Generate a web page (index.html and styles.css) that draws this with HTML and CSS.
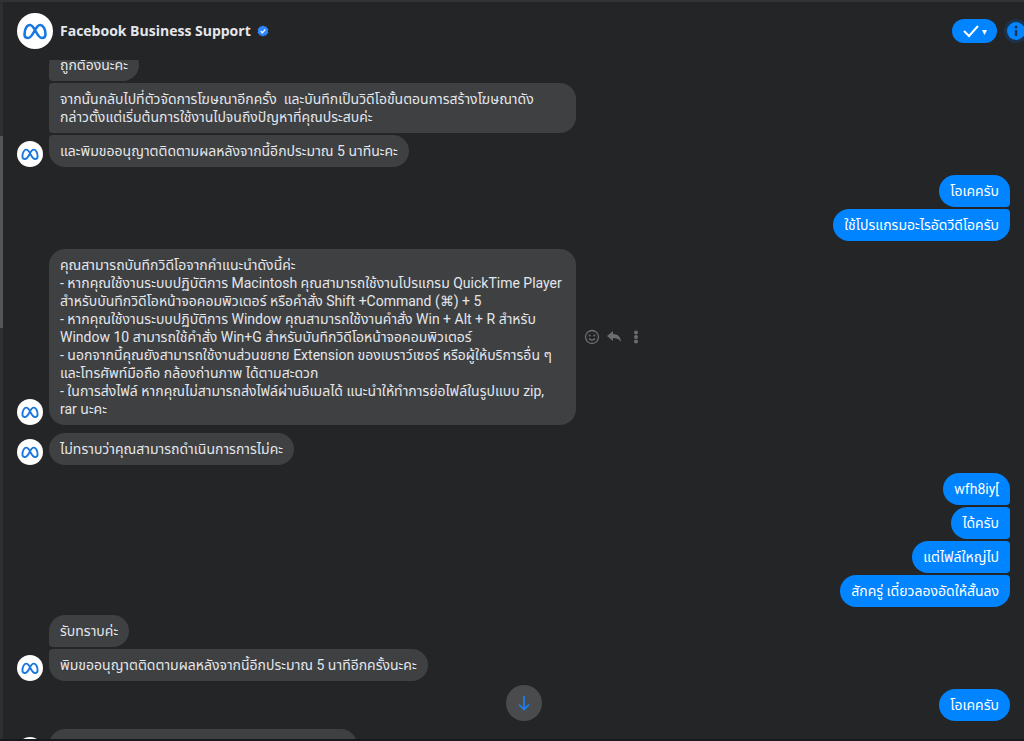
FILE: index.html
```html
<!DOCTYPE html>
<html lang="th">
  <head>
    <meta charset="utf-8">
    <title>Facebook Business Support</title>
    <link rel="stylesheet" href="styles.css">
  </head>
  <body>
    <svg class="symbols">
      <symbol id="meta" viewBox="0 0 36 36">
        <path d="M7.500 21.500C7.500 16 10 12 13 12c5 0 6.500 13 12 13 2 0 3.500-1.300 3.500-4C28.500 16 26 12 23 12c-5 0-6.500 13-12 13-2 0-3.500-1-3.500-3.500z" fill="none" stroke="#1877e0" stroke-width="2.600"/>
      </symbol>
    </svg>

    <div class="sidebar"><div class="thumb"></div></div>

    <main class="chat">
      <header class="header">
        <svg class="logo"><use href="#meta"/></svg>
        <h1>Facebook Business Support</h1>
        <svg class="verified" viewBox="0 0 12 12">
          <path d="M6 0.500l1.500 1 1.800-.1.600 1.700 1.500 1-.6 1.900.6 1.900-1.500 1-.6 1.700-1.800-.1-1.500 1-1.500-1-1.800.1-.6-1.700-1.500-1L1.200 6 .6 4.100l1.500-1 .6-1.700 1.800.1z" fill="#2d88ff"/>
          <path d="M3.700 6.100l1.600 1.600 3-3.200" fill="none" stroke="#fff" stroke-width="1.300"/>
        </svg>
        <div class="headerButtons">
          <button class="doneButton" aria-label="Done">
            <svg width="26" height="14" viewBox="0 0 26 14">
              <path d="M2 7l5 5L16 2" fill="none" stroke="#fff" stroke-width="2"/>
              <path d="M20 6h5l-2.500 5z" fill="#fff"/>
            </svg>
          </button>
          <button class="infoButton" aria-label="Info">
            <svg width="18" height="18" viewBox="0 0 18 18">
              <circle cx="9" cy="9" r="9" fill="#0084ff"/>
              <circle cx="9" cy="5" r="1.500" fill="#1c3350"/>
              <path d="M9 8v6" stroke="#1c3350" stroke-width="2.400"/>
            </svg>
          </button>
        </div>
      </header>

      <div class="messages">
        <div class="group in clipped">
          <p class="bubble">ถูกต้องนะคะ</p>
          <p class="bubble long">จากนั้นกลับไปที่ตัวจัดการโฆษณาอีกครั้ง &nbsp;และบันทึกเป็นวิดีโอขั้นตอนการสร้างโฆษณาดัง<br>กล่าวตั้งแต่เริ่มต้นการใช้งานไปจนถึงปัญหาที่คุณประสบค่ะ</p>
          <p class="bubble">และพิมขออนุญาตติดตามผลหลังจากนี้อีกประมาณ 5 นาทีนะคะ</p>
          <svg class="avatar"><use href="#meta"/></svg>
        </div>

        <div class="group out">
          <p class="bubble">โอเคครับ</p>
          <p class="bubble">ใช้โปรแกรมอะไรอัดวีดีโอครับ</p>
        </div>

        <div class="group in">
          <p class="bubble long">คุณสามารถบันทึกวิดีโอจากคำแนะนำดังนี้ค่ะ<br>- หากคุณใช้งานระบบปฏิบัติการ Macintosh คุณสามารถใช้งานโปรแกรม QuickTime Player<br>สำหรับบันทึกวิดีโอหน้าจอคอมพิวเตอร์ หรือคำสั่ง Shift +Command (⌘) + 5<br>- หากคุณใช้งานระบบปฏิบัติการ Window คุณสามารถใช้งานคำสั่ง Win + Alt + R สำหรับ<br>Window 10 สามารถใช้คำสั่ง Win+G สำหรับบันทึกวิดีโอหน้าจอคอมพิวเตอร์<br>- นอกจากนี้คุณยังสามารถใช้งานส่วนขยาย Extension ของเบราว์เซอร์ หรือผู้ให้บริการอื่น ๆ<br>และโทรศัพท์มือถือ กล้องถ่านภาพ ได้ตามสะดวก<br>- ในการส่งไฟล์ หากคุณไม่สามารถส่งไฟล์ผ่านอีเมลได้ แนะนำให้ทำการย่อไฟล์ในรูปแบบ zip,<br>rar นะคะ</p>
          <svg class="avatar"><use href="#meta"/></svg>
          <div class="actions">
            <button aria-label="React">
              <svg width="16" height="16" viewBox="0 0 16 16">
                <circle cx="8" cy="8" r="6.500" fill="none" stroke="#6c6d6f" stroke-width="1.300"/>
                <circle cx="5.700" cy="6.500" r="1" fill="#6c6d6f"/>
                <circle cx="10.300" cy="6.500" r="1" fill="#6c6d6f"/>
                <path d="M5 9.500c1.500 2 4.500 2 6 0" fill="none" stroke="#6c6d6f" stroke-width="1.300"/>
              </svg>
            </button>
            <button aria-label="Reply">
              <svg width="16" height="16" viewBox="0 0 16 16">
                <path d="M1 7l6-5v3c5 0 8 3 8 8-2-3-4-4-8-4v3z" fill="#6c6d6f"/>
              </svg>
            </button>
            <button aria-label="More">
              <svg width="16" height="16" viewBox="0 0 16 16">
                <circle cx="8" cy="3.500" r="2" fill="#6c6d6f"/>
                <circle cx="8" cy="8" r="2" fill="#6c6d6f"/>
                <circle cx="8" cy="12.500" r="2" fill="#6c6d6f"/>
              </svg>
            </button>
          </div>
        </div>

        <div class="group in">
          <p class="bubble">ไม่ทราบว่าคุณสามารถดำเนินการการไม่คะ</p>
          <svg class="avatar"><use href="#meta"/></svg>
        </div>

        <div class="group out">
          <p class="bubble">wfh8iy[</p>
          <p class="bubble">ได้ครับ</p>
          <p class="bubble">แต่ไฟล์ใหญ่ไป</p>
          <p class="bubble">สักครู่ เดี๋ยวลองอัดให้สั้นลง</p>
        </div>

        <div class="group in">
          <p class="bubble">รับทราบค่ะ</p>
          <p class="bubble">พิมขออนุญาตติดตามผลหลังจากนี้อีกประมาณ 5 นาทีอีกครั้งนะคะ</p>
          <svg class="avatar"><use href="#meta"/></svg>
        </div>

        <div class="group out">
          <p class="bubble">โอเคครับ</p>
        </div>

        <div class="group in next">
          <p class="bubble"></p>
          <svg class="avatar"><use href="#meta"/></svg>
        </div>
      </div>

      <button class="scrollDown" aria-label="Scroll to bottom">
        <svg width="16" height="16" viewBox="0 0 16 16">
          <path d="M8 1v13M3 9.500L8 14.500 13 9.500" fill="none" stroke="#1a80f0" stroke-width="1.700"/>
        </svg>
      </button>
    </main>
  </body>
</html>
```

FILE: styles.css
```css
*{
  box-sizing: border-box;
}

body{
  margin: 0;
  height: 100vh;
  display: flex;
  overflow: hidden;
  background: #242526;
  color: #e4e6eb;
  font-family: Roboto, "Noto Sans Thai", "Noto Sans", sans-serif;
  font-size: 14px;
  line-height: 18px;
  border-top: 2px solid #323334;
  border-bottom: 2px solid #18191a;
}

button{
  padding: 0;
  border: 0;
  background: none;
  display: flex;
  align-items: center;
  justify-content: center;
}

.symbols{
  display: none;
}

.sidebar{
  width: 3px;
  padding-top: 134px;
  background: #2e2f30;
}

.thumb{
  height: 192px;
  background: #555657;
}

.chat{
  flex: 1;
  min-width: 0;
  display: flex;
  flex-direction: column;
  position: relative;
}

.header{
  height: 58px;
  flex: none;
  padding-left: 14px;
  display: flex;
  align-items: center;
}

.header h1{
  margin: 0 6px 0 7px;
  font-family: "Open Sans", "Noto Sans", sans-serif;
  font-size: 14px;
  font-weight: 700;
}

.logo{
  width: 36px;
  height: 36px;
  border-radius: 50%;
  background: #fff;
}

.verified{
  width: 12px;
  height: 12px;
}

.headerButtons{
  margin-left: auto;
  margin-right: -4px;
  display: flex;
  align-items: center;
  gap: 7px;
}

.doneButton{
  width: 45px;
  height: 24px;
  border-radius: 12px;
  background: #0084ff;
}

.infoButton{
  width: 24px;
  height: 24px;
  border-radius: 50%;
  background: #1c3350;
}

.messages{
  flex: 1;
  min-height: 0;
  overflow: hidden;
  padding: 0 14px;
  display: flex;
  flex-direction: column;
  gap: 8px;
}

.group{
  position: relative;
  flex: none;
  display: flex;
  flex-direction: column;
  align-items: flex-start;
  gap: 2px;
}

.clipped{
  margin-top: -11px;
}

.in{
  padding-left: 32px;
}

.out{
  align-items: flex-end;
}

.bubble{
  margin: 0;
  padding: 7px 11px;
  min-height: 32px;
  border-radius: 16px;
  background: #3e4042;
  white-space: nowrap;
}

.long{
  min-width: 527px;
}

.in .bubble:not(:first-child){
  border-top-left-radius: 4px;
}

.in .bubble:has(+ .bubble){
  border-bottom-left-radius: 4px;
}

.out .bubble{
  background: #0084ff;
  color: #fff;
}

.out .bubble:not(:first-child){
  border-top-right-radius: 4px;
}

.out .bubble:not(:last-child){
  border-bottom-right-radius: 4px;
}

.next .bubble{
  width: 308px;
  height: 34px;
}

.avatar{
  position: absolute;
  left: 0;
  bottom: 0;
  width: 26px;
  height: 26px;
  border-radius: 50%;
  background: #fff;
}

.actions{
  position: absolute;
  left: 567px;
  top: 0;
  bottom: 0;
  display: flex;
  align-items: center;
  gap: 6px;
}

.scrollDown{
  position: absolute;
  left: 51%;
  bottom: 18px;
  width: 36px;
  height: 36px;
  margin-left: -18px;
  border-radius: 50%;
  background: #4a4b4c;
}
```
